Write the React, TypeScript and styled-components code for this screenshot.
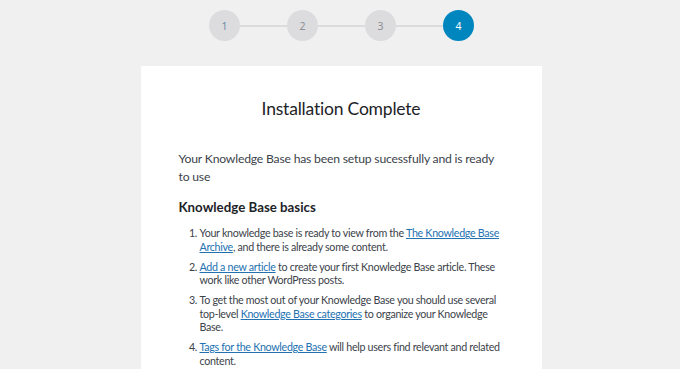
import styled, { createGlobalStyle } from 'styled-components';

const GlobalStyle = createGlobalStyle`
	body {
		margin: 0;
		background: #f0f0f1;
		font-family: Lato, 'Noto Sans', sans-serif;
		color: #3c434a;
	}
`;

const steps = [1, 2, 3, 4];
const current = 4;

const App = () => {
	return (
		<Page>
			<GlobalStyle />
			<Steps>
				{steps.map((n, i) => (
					<StepGroup key={n}>
						{i > 0 && <Connector />}
						<Step $active={n === current} $first={n === 1}>
							{n}
						</Step>
					</StepGroup>
				))}
			</Steps>
			<Card>
				<Title>Installation Complete</Title>
				<Intro>Your Knowledge Base has been setup sucessfully and is ready to use</Intro>
				<Heading>Knowledge Base basics</Heading>
				<List>
					<Item>
						Your knowledge base is ready to view from the <Link href="#">The Knowledge Base Archive</Link>, and there is
						already some content.
					</Item>
					<Item>
						<Link href="#">Add a new article</Link> to create your first Knowledge Base article. These work like other
						WordPress posts.
					</Item>
					<Item>
						To get the most out of your Knowledge Base you should use several top-level{' '}
						<Link href="#">Knowledge Base categories</Link> to organize your Knowledge Base.
					</Item>
					<Item>
						<Link href="#">Tags for the Knowledge Base</Link> will help users find relevant and related content.
					</Item>
				</List>
			</Card>
		</Page>
	);
};

const Page = styled.div`
	display: flex;
	flex-direction: column;
	align-items: center;
	padding-top: 10px;
	padding-left: 2px;
`;

const Steps = styled.div`
	display: flex;
	align-items: center;
	margin-left: 1px;
`;

const StepGroup = styled.div`
	display: flex;
	align-items: center;
`;

const Connector = styled.div`
	width: 47px;
	height: 2px;
	background: #dcdcde;
`;

const Step = styled.div<{ $active: boolean; $first: boolean }>`
	width: 31px;
	height: 31px;
	border-radius: 50%;
	display: flex;
	align-items: center;
	justify-content: center;
	font-family: 'Noto Sans', sans-serif;
	font-size: 10.5px;
	background: ${(p) => (p.$active ? '#0086bf' : '#dcdcde')};
	color: ${(p) => (p.$active ? '#ffffff' : p.$first ? '#6f8ca3' : '#8c8f94')};
`;

const Card = styled.div`
	box-sizing: border-box;
	width: 401px;
	margin-top: 25px;
	background: #ffffff;
	padding: 30px 36px 20px 38px;
`;

const Title = styled.h1`
	margin: 0 2px 0 0;
	text-align: center;
	font-size: 17.5px;
	font-weight: 400;
	letter-spacing: -0.2px;
	line-height: 25px;
	color: #1d2327;
`;

const Intro = styled.p`
	margin: 29px 2px 0 0;
	font-size: 12.2px;
	letter-spacing: -0.2px;
	line-height: 17.5px;
`;

const Heading = styled.h2`
	margin: 12px 0 0;
	font-size: 13.3px;
	font-weight: 700;
	line-height: 20px;
	color: #1d2327;
`;

const List = styled.ol`
	margin: 9px 0 0;
	padding-left: 21px;
	font-size: 10.7px;
	letter-spacing: -0.3px;
	line-height: 13.5px;
`;

const Item = styled.li`
	margin-bottom: 6.5px;
`;

const Link = styled.a`
	color: #2271b1;
	text-decoration: underline;
`;

export default App;
